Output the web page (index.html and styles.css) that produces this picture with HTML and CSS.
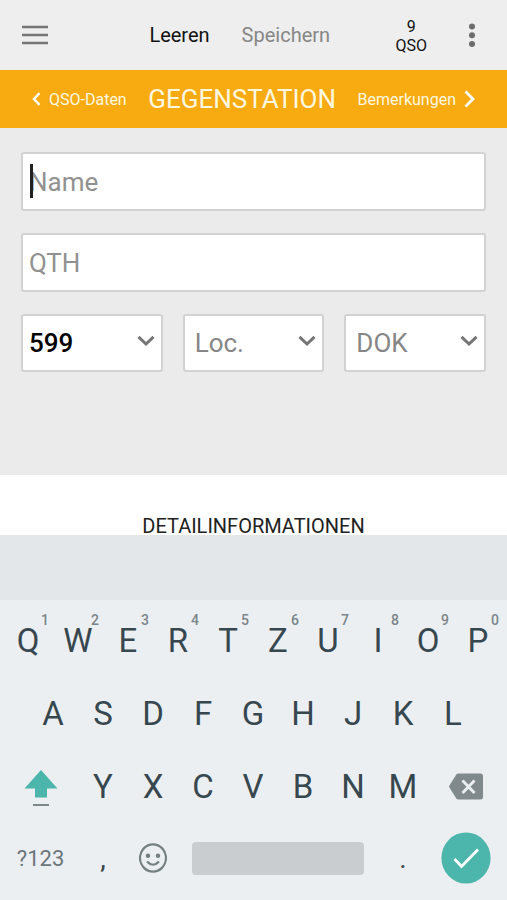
FILE: index.html
```html
<!DOCTYPE html>
<html lang="de">
<head>
<meta charset="utf-8">
<meta name="viewport" content="width=device-width, initial-scale=1">
<title>Gegenstation</title>
<link rel="stylesheet" href="styles.css">
</head>
<body>
<div class="app">
  <header class="toolbar">
    <button class="icon-btn" type="button" aria-label="Menü">
      <svg width="26" height="20" viewBox="0 0 26 20"><path d="M0 2h26M0 10h26M0 18h26" stroke="#757575" stroke-width="2.600"/></svg>
    </button>
    <div class="actions">
      <button class="action" type="button">Leeren</button>
      <button class="action" type="button" disabled>Speichern</button>
    </div>
    <div class="counter"><span>9</span><span>QSO</span></div>
    <button class="icon-btn" type="button" aria-label="Mehr">
      <svg width="6" height="26" viewBox="0 0 6 26" fill="#6c6c6c"><circle cx="3" cy="4.500" r="3"/><circle cx="3" cy="13.300" r="3"/><circle cx="3" cy="22" r="3"/></svg>
    </button>
  </header>

  <nav class="pager">
    <a class="pager-link" href="#qso">
      <svg width="9" height="14" viewBox="0 0 9 14"><path d="M7.500 1.200 2 7l5.500 5.800" fill="none" stroke="#fff" stroke-width="2.400"/></svg>
      QSO-Daten
    </a>
    <h1 class="pager-title">GEGENSTATION</h1>
    <a class="pager-link" href="#bemerkungen">
      Bemerkungen
      <svg width="11" height="18" viewBox="0 0 11 18"><path d="M1.500 1.500 9 9l-7.500 7.500" fill="none" stroke="#fff" stroke-width="2.800"/></svg>
    </a>
  </nav>

  <main class="content">
    <form class="form">
      <div class="field">
        <input class="control" type="text" placeholder="Name" aria-label="Name">
        <span class="caret"></span>
      </div>
      <div class="field">
        <input class="control" type="text" placeholder="QTH" aria-label="QTH">
      </div>
      <div class="selects">
        <div class="field">
          <select class="control filled" aria-label="Rapport"><option>599</option></select>
          <svg class="chevron" width="18" height="12" viewBox="0 0 18 12"><path d="M1.500 1.800 9 9l7.500-7.200"/></svg>
        </div>
        <div class="field">
          <select class="control empty" aria-label="Locator"><option>Loc.</option></select>
          <svg class="chevron" width="18" height="12" viewBox="0 0 18 12"><path d="M1.500 1.800 9 9l7.500-7.200"/></svg>
        </div>
        <div class="field">
          <select class="control empty" aria-label="DOK"><option>DOK</option></select>
          <svg class="chevron" width="18" height="12" viewBox="0 0 18 12"><path d="M1.500 1.800 9 9l7.500-7.200"/></svg>
        </div>
      </div>
    </form>
  </main>

  <section class="details"><h2 class="details-title">DETAILINFORMATIONEN</h2></section>

  <section class="keyboard" aria-label="Tastatur">
    <div class="suggestions"></div>
    <div class="keys">
      <div class="row">
        <button class="key" type="button">Q<sup>1</sup></button>
        <button class="key" type="button">W<sup>2</sup></button>
        <button class="key" type="button">E<sup>3</sup></button>
        <button class="key" type="button">R<sup>4</sup></button>
        <button class="key" type="button">T<sup>5</sup></button>
        <button class="key" type="button">Z<sup>6</sup></button>
        <button class="key" type="button">U<sup>7</sup></button>
        <button class="key" type="button">I<sup>8</sup></button>
        <button class="key" type="button">O<sup>9</sup></button>
        <button class="key" type="button">P<sup>0</sup></button>
      </div>
      <div class="row row-inset">
        <button class="key" type="button">A</button>
        <button class="key" type="button">S</button>
        <button class="key" type="button">D</button>
        <button class="key" type="button">F</button>
        <button class="key" type="button">G</button>
        <button class="key" type="button">H</button>
        <button class="key" type="button">J</button>
        <button class="key" type="button">K</button>
        <button class="key" type="button">L</button>
      </div>
      <div class="row">
        <button class="key key-wide" type="button" aria-label="Umschalt">
          <svg width="34" height="38" viewBox="0 0 34 38"><path d="M17 2 33.500 20.500H23V29.500H11V20.500H.5Z" fill="#4db6ac"/><path d="M9 37h16" stroke="#7d8689" stroke-width="2"/></svg>
        </button>
        <button class="key" type="button">Y</button>
        <button class="key" type="button">X</button>
        <button class="key" type="button">C</button>
        <button class="key" type="button">V</button>
        <button class="key" type="button">B</button>
        <button class="key" type="button">N</button>
        <button class="key" type="button">M</button>
        <button class="key key-wide" type="button" aria-label="Löschen">
          <svg width="34" height="28" viewBox="0 0 34 28"><path d="M9 .5H31.500Q34 .5 34 3V24Q34 26.500 31.500 26.500H9Q8 26.500 7.300 25.500L.6 14.800Q-.2 13.500 .6 12.200L7.300 1.500Q8 .5 9 .5Z" fill="#808a8d"/><path d="m13.500 7.500 12 12.500m0-12.500-12 12.500" stroke="#eceff1" stroke-width="2.900"/></svg>
        </button>
      </div>
      <div class="row row-last">
        <button class="key key-wide key-mode" type="button">?123</button>
        <button class="key key-mark" type="button">,</button>
        <button class="key" type="button" aria-label="Emoji">
          <svg width="28" height="30" viewBox="0 0 28 30"><ellipse cx="14" cy="15" rx="13" ry="13.600" fill="none" stroke="#757e81" stroke-width="2.200"/><circle cx="9" cy="12.800" r="2.200" fill="#757e81"/><circle cx="19" cy="12.800" r="2.200" fill="#757e81"/><path d="M8 18.500q6 6.500 12 0" fill="none" stroke="#757e81" stroke-width="2.200"/></svg>
        </button>
        <button class="key key-space" type="button" aria-label="Leerzeichen"><span class="space-bar"></span></button>
        <button class="key key-mark" type="button">.</button>
        <button class="key key-wide" type="button" aria-label="Fertig">
          <svg width="50" height="52" viewBox="0 0 50 52"><ellipse cx="25" cy="26" rx="24.600" ry="25.600" fill="#4db6ac"/><path d="m13.500 27 7 7.500 16.500-17" fill="none" stroke="#fff" stroke-width="2.800"/></svg>
        </button>
      </div>
    </div>
  </section>
</div>
</body>
</html>
```
FILE: styles.css
```css
* {
  box-sizing: border-box;
}

body {
  margin: 0;
  font-family: Roboto, "Liberation Sans", sans-serif;
  color: #212121;
  background: #ebebeb;
}

button {
  border: 0;
  padding: 0;
  background: none;
  font: inherit;
  color: inherit;
}

svg {
  display: block;
  flex: none;
}

.app {
  display: flex;
  flex-direction: column;
  min-height: 100vh;
}

.toolbar {
  display: flex;
  align-items: center;
  height: 70px;
  padding: 0 32px 0 22px;
  background: #eee;
}

.actions {
  display: flex;
  flex: 1;
  justify-content: center;
  gap: 32px;
  padding-left: 36px;
}

.action {
  font-size: 20px;
  line-height: 24px;
  color: #111;
}

.action:disabled {
  color: #868686;
}

.counter {
  display: flex;
  flex-direction: column;
  align-items: center;
  margin-right: 42px;
  padding-top: 2px;
  font-size: 16px;
  line-height: 19px;
  color: #111;
}

.pager {
  display: flex;
  align-items: center;
  justify-content: space-between;
  height: 58px;
  padding: 0 32px;
  background: #f8ab10;
  color: #fff8e1;
}

.pager-link {
  display: flex;
  align-items: center;
  gap: 8px;
  font-size: 16px;
  color: inherit;
  text-decoration: none;
}

.pager-title {
  margin: 0;
  font-size: 26px;
  font-weight: 400;
}

.content {
  flex: 1;
  padding: 24px 21px;
}

.form {
  display: flex;
  flex-direction: column;
  gap: 22px;
}

.field {
  position: relative;
  min-width: 0;
}

.control {
  display: block;
  width: 100%;
  height: 59px;
  border: 2px solid #d2d2d2;
  border-radius: 3px;
  padding: 0 6px;
  background: #fff;
  font-family: inherit;
  font-size: 26px;
  color: #000;
  appearance: none;
  outline: 0;
}

.control::placeholder {
  color: #919191;
  opacity: 1;
}

.caret {
  position: absolute;
  top: 12px;
  left: 9px;
  width: 3px;
  height: 34px;
  background: #212121;
}

.selects {
  display: grid;
  grid-template-columns: repeat(3, 1fr);
  gap: 20px;
}

.filled {
  font-weight: 500;
}

.empty {
  padding-left: 10px;
  color: #868686;
}

.chevron {
  position: absolute;
  top: 21px;
  right: 8px;
  fill: none;
  stroke: #757575;
  stroke-width: 3;
  pointer-events: none;
}

.selects .control {
  height: 58px;
}

.details {
  padding-top: 42px;
  background: #fff;
  text-align: center;
}

.details-title {
  margin: 0;
  font-size: 20px;
  font-weight: 400;
  line-height: 18px;
}

.keyboard {
  background: #eceff1;
  color: #37474f;
}

.suggestions {
  height: 65px;
  background: #e4e7e9;
}

.keys {
  padding: 4px 4px 7px 3px;
}

.row {
  display: flex;
  height: 73px;
}

.row-inset {
  padding: 0 5%;
}

.row-last {
  height: 70px;
}

.key {
  position: relative;
  display: flex;
  flex: 2 1 0;
  align-items: center;
  justify-content: center;
  font-size: 33px;
}

.key-wide {
  flex-grow: 3;
}

.key-space {
  flex-grow: 8;
}

.key-mode {
  font-size: 22px;
  color: #6b767b;
}

.key-mark {
  font-size: 28px;
}

.key sup {
  position: absolute;
  top: 8px;
  right: 4px;
  font-size: 14px;
  font-weight: 500;
  line-height: 16px;
  color: #7b8589;
}

.space-bar {
  flex: 1;
  height: 33px;
  margin: 0 14px;
  border-radius: 4px;
  background: #c9cdcf;
}
```
